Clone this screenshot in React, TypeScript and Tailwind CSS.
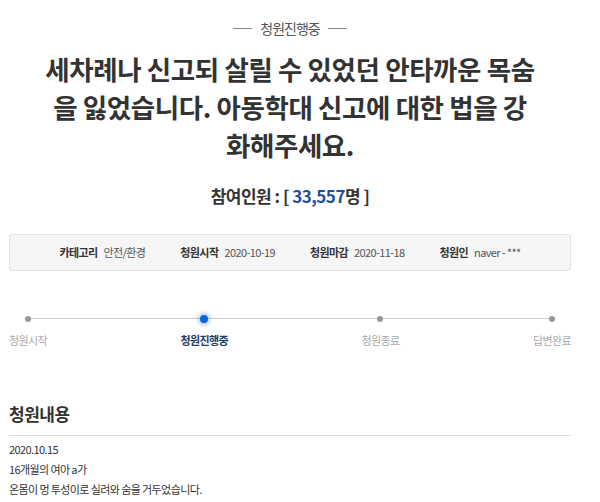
import React from 'react';

const FONT = '"Noto Sans CJK KR", "Noto Sans", sans-serif';

const infoItems = [
  { label: '카테고리', value: '안전/환경' },
  { label: '청원시작', value: '2020-10-19' },
  { label: '청원마감', value: '2020-11-18' },
  { label: '청원인', value: 'naver - ***' },
];

const steps = [
  { label: '청원시작', active: false },
  { label: '청원진행중', active: true },
  { label: '청원종료', active: false },
  { label: '답변완료', active: false },
];

const App = () => {
  return (
    <div className="w-[600px] h-[502px] overflow-hidden bg-white" style={{ fontFamily: FONT }}>
      <div className="pl-[9px] pr-[29px]">
        {/* status tag */}
        <div className="flex items-center justify-center gap-[8px] pt-[18px]">
          <span className="w-[19px] h-px bg-[#888]" />
          <span className="text-[14px] leading-[20px] tracking-[-1px] text-[#555]">청원진행중</span>
          <span className="w-[19px] h-px bg-[#888]" />
        </div>

        {/* title */}
        <div className="mt-[12px] text-center font-bold text-[26.5px] leading-[38px] tracking-[-0.4px] text-[#333]">
          <div>세차례나 신고되 살릴 수 있었던 안타까운 목숨</div>
          <div>을 잃었습니다. 아동학대 신고에 대한 법을 강</div>
          <div>화해주세요.</div>
        </div>

        {/* participants */}
        <div className="mt-[20px] text-center text-[17px] font-bold leading-[24px] tracking-[-0.5px] text-[#333]">
          참여인원 : [ <span className="text-[#1f4f9c]">33,557</span>명 ]
        </div>

        {/* info box */}
        <div className="mt-[26px] h-[37px] bg-[#f6f6f6] border border-[#e3e3e3] rounded-[3px] flex items-center justify-center gap-[35px] text-[11px] tracking-[-0.6px]">
          {infoItems.map((it) => (
            <div key={it.label} className="flex items-center gap-[6px]">
              <span className="font-bold text-[#333]">{it.label}</span>
              <span className="text-[#555]">{it.value}</span>
            </div>
          ))}
        </div>

        {/* progress */}
        <div className="relative mt-[44px]">
          <div className="absolute top-[3px] left-[19px] right-[19px] h-px bg-[#cfcfcf]" />
          <div className="relative flex justify-between">
            {steps.map((s) => (
              <div key={s.label} className="flex flex-col items-center">
                <div className="h-[7px] flex items-center justify-center">
                  {s.active ? (
                    <span className="w-[8px] h-[8px] rounded-full bg-[#0a66d6] shadow-[0_0_4px_2px_rgba(10,102,214,0.35)]" />
                  ) : (
                    <span className="w-[6px] h-[6px] rounded-full bg-[#999]" />
                  )}
                </div>
                <span
                  className={
                    s.active
                      ? 'mt-[10px] text-[11px] leading-[16px] tracking-[-0.6px] font-bold text-[#1d3a6a]'
                      : 'mt-[10px] text-[11px] leading-[16px] tracking-[-0.6px] text-[#aaa]'
                  }
                >
                  {s.label}
                </span>
              </div>
            ))}
          </div>
        </div>

        {/* content */}
        <div className="mt-[54px] pb-[9px] border-b border-[#ddd] text-[17px] font-bold leading-[24px] tracking-[-0.5px] text-[#333]">
          청원내용
        </div>
        <div className="pt-[3px] text-[11px] leading-[20px] tracking-[-0.6px] text-[#333]">
          <p>2020.10.15</p>
          <p>16개월의 여아 a가</p>
          <p>온몸이 멍 투성이로 실려와 숨을 거두었습니다.</p>
        </div>
      </div>
    </div>
  );
};

export default App;
